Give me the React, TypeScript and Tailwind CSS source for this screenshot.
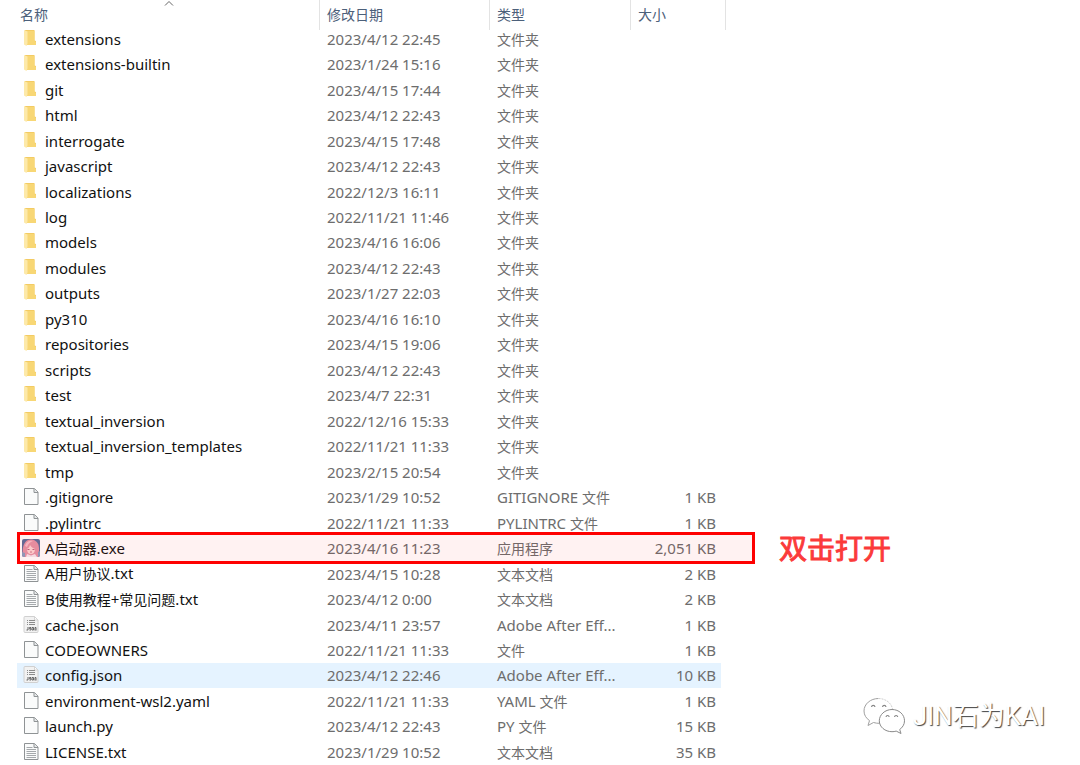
type Kind = "folder" | "blank" | "text" | "json" | "app";

type Entry = {
  name: string;
  date: string;
  type: string;
  size?: string;
  kind: Kind;
};

const folder = (name: string, date: string): Entry => ({ name, date, type: "文件夹", kind: "folder" });

const entries: Entry[] = [
  folder("extensions", "2023/4/12 22:45"),
  folder("extensions-builtin", "2023/1/24 15:16"),
  folder("git", "2023/4/15 17:44"),
  folder("html", "2023/4/12 22:43"),
  folder("interrogate", "2023/4/15 17:48"),
  folder("javascript", "2023/4/12 22:43"),
  folder("localizations", "2022/12/3 16:11"),
  folder("log", "2022/11/21 11:46"),
  folder("models", "2023/4/16 16:06"),
  folder("modules", "2023/4/12 22:43"),
  folder("outputs", "2023/1/27 22:03"),
  folder("py310", "2023/4/16 16:10"),
  folder("repositories", "2023/4/15 19:06"),
  folder("scripts", "2023/4/12 22:43"),
  folder("test", "2023/4/7 22:31"),
  folder("textual_inversion", "2022/12/16 15:33"),
  folder("textual_inversion_templates", "2022/11/21 11:33"),
  folder("tmp", "2023/2/15 20:54"),
  { name: ".gitignore", date: "2023/1/29 10:52", type: "GITIGNORE 文件", size: "1 KB", kind: "blank" },
  { name: ".pylintrc", date: "2022/11/21 11:33", type: "PYLINTRC 文件", size: "1 KB", kind: "blank" },
  { name: "A启动器.exe", date: "2023/4/16 11:23", type: "应用程序", size: "2,051 KB", kind: "app" },
  { name: "A用户协议.txt", date: "2023/4/15 10:28", type: "文本文档", size: "2 KB", kind: "text" },
  { name: "B使用教程+常见问题.txt", date: "2023/4/12 0:00", type: "文本文档", size: "2 KB", kind: "text" },
  { name: "cache.json", date: "2023/4/11 23:57", type: "Adobe After Eff...", size: "1 KB", kind: "json" },
  { name: "CODEOWNERS", date: "2022/11/21 11:33", type: "文件", size: "1 KB", kind: "blank" },
  { name: "config.json", date: "2023/4/12 22:46", type: "Adobe After Eff...", size: "10 KB", kind: "json" },
  { name: "environment-wsl2.yaml", date: "2022/11/21 11:33", type: "YAML 文件", size: "1 KB", kind: "blank" },
  { name: "launch.py", date: "2023/4/12 22:43", type: "PY 文件", size: "15 KB", kind: "blank" },
  { name: "LICENSE.txt", date: "2023/1/29 10:52", type: "文本文档", size: "35 KB", kind: "text" },
];

/* Han characters are set one step smaller than the Latin text beside them. */
function MixedText({ text }: { text: string }) {
  return (
    <>
      {text.split(/([\u4e00-\u9fff]+)/).map((run, i) =>
        i % 2 === 1 ? (
          <span key={i} className="text-[14px]">
            {run}
          </span>
        ) : (
          run
        ),
      )}
    </>
  );
}

function FileIcon({ kind }: { kind: Kind }) {
  return (
    <svg viewBox="0 0 20 20" className="size-5 shrink-0" aria-hidden="true">
      {kind === "folder" && (
        <>
          <path d="M4 1h9.500v10.500l1.500.500v4H5z" fill="#f3cb63" />
          <path d="M6 2h7.500v10l1.500 1v3H6z" fill="#f8d775" />
          <path d="M3 1l3.500 1.500v12L5.500 17 3 15.500z" fill="#fde9a9" />
        </>
      )}
      {(kind === "blank" || kind === "text") && (
        <>
          <path d="M3.500 1.500h10l3.500 3.500v12.500H3.500z" fill="#fafbfb" stroke="#8f9395" />
          <path d="M13 1.500v4h4" fill="#e4e7e8" stroke="#8f9395" />
        </>
      )}
      {kind === "text" && (
        <path d="M5.500 5.500h6M5.500 7.500h9.500M5.500 9.500h9.500M5.500 11.500h9.500M5.500 13.500h9.500M5.500 15.500h9.500" stroke="#a5a9ac" />
      )}
      {kind === "json" && (
        <>
          <path d="M4 1.500h9.500L17 5v11.500a1 1 0 0 1-1 1H4a1 1 0 0 1-1-1v-14a1 1 0 0 1 1-1z" fill="#f2f2f2" stroke="#d0d0d0" />
          <path d="M13.500 1.500V5H17z" fill="#fff" stroke="#d4d4d4" />
          <path d="M6 5.500h1M8 5.500h6M6 7.500h1M8 7.500h6M6 9.500h1M8 9.500h6" stroke="#8b8b8b" />
          <path d="M7 12v3H5.500M10 12.500H8.500v1.200H10V15H8.500M11 12.500h1.500V15H11zM14 15.500v-3h1v3" fill="none" stroke="#666" />
        </>
      )}
      {kind === "app" && (
        <>
          <rect x="1" y="1" width="18" height="18" rx="2" fill="#5c6f9c" />
          <path d="M2 19C1 12 2 5 6 2.500 10 0 16 2 17.500 7c1 4 .5 8-.5 12z" fill="#e593a6" />
          <path d="M4 8C5 4 8 2 12 3c-3 1-5 3-6 6z" fill="#f6bdc9" />
          <path d="M6 11c1.500-1 2.500-2 3-4 1 2 3 3 5 4 0 3-1.500 5-4 5s-4-2-4-5z" fill="#fbd5d5" />
          <path d="M6.500 11.500h2M11.500 11.500h2" stroke="#b9607c" />
          <path d="M9 14h2" stroke="#d0768a" />
          <path d="M5 19l1-3 4 1.500L14 16l2 3z" fill="#f3e7ee" />
          <path d="M1 14l3 1v4H3a2 2 0 0 1-2-2zM17 14l2-1v4a2 2 0 0 1-2 2z" fill="#8a9dc0" />
        </>
      )}
    </svg>
  );
}

function Callout() {
  return (
    <div className="pointer-events-none absolute -inset-y-[3px] left-0 flex items-center">
      <div className="h-full w-[738px] border-[3px] border-[#fe0000] bg-[#ff0000]/5" />
      <span className="pl-6 text-[28px] leading-none whitespace-nowrap text-[#fb3a3a] [-webkit-text-stroke:1px_#fb3a3a]">
        双击打开
      </span>
    </div>
  );
}

function HeaderCell({ label, sorted = false, span = 1 }: { label: string; sorted?: boolean; span?: number }) {
  return (
    <th scope="col" colSpan={span} className="relative p-0 text-left align-top font-normal">
      <button
        type="button"
        className={`-mb-1 block h-[30px] w-full border-r border-[#e3e3e3] text-left text-[14px] leading-[30px] text-[#4c607a] ${sorted ? "pl-[3px]" : "pl-[7px]"}`}
      >
        {label}
      </button>
      {sorted && (
        <svg viewBox="0 0 10 6" className="absolute top-0 left-1/2 h-1.5 w-2.5 -translate-x-1/2" aria-hidden="true">
          <path d="M1 5.500L5 1.500l4 4" fill="none" stroke="#666" />
        </svg>
      )}
    </th>
  );
}

function Watermark() {
  return (
    <div className="absolute right-[35px] bottom-[30px] flex items-center gap-2">
      <svg viewBox="0 0 42 38" className="h-[38px] w-[42px]" aria-hidden="true">
        <g fill="#fff" stroke="#8a8a8a" strokeWidth="1">
          <path
            d="M15.500 1.500C7.500 1.500 1 7 1 14c0 4 2.200 7.300 5.500 9.600L5 28.500l5.500-3c2 .6 4 .9 6 .8"
            stroke="#a0a0a0"
          />
          <path d="M15.500 1.500c7 0 13 4.500 14 10.500" stroke="#cfcfcf" strokeDasharray="2 1" />
          <path d="M29 12.500c7 0 12.500 5 12.500 11.300 0 3.700-2 6.700-4.800 8.700l1.300 4-4.800-2.400c-1.300.4-2.800.6-4.200.6-7 0-12.700-4.800-12.700-10.900S22 12.500 29 12.500z" />
        </g>
        <g fill="none" stroke="#858585" strokeWidth="1.200">
          <path d="M8.500 10c.4-2.200 3.100-2.200 3.500 0M19.500 10c.4-2.200 3.100-2.200 3.500 0M23 20c.4-2 2.800-2 3.200 0M31.500 20c.4-2 2.800-2 3.200 0" />
        </g>
      </svg>
      <span className="font-[Roboto,'Noto_Sans_CJK_SC',sans-serif] text-[26px] leading-8 whitespace-nowrap text-white [text-shadow:1px_1px_1px_#444]">
        JIN石为KAI
      </span>
    </div>
  );
}

export default function App() {
  return (
    <main className="relative min-h-screen overflow-hidden bg-white pl-[17px] font-['Noto_Sans','Noto_Sans_CJK_SC',sans-serif]">
      <table className="h-screen w-full max-w-[709px] table-fixed border-collapse">
        <colgroup>
          <col className="w-[303px]" />
          <col className="w-[170px]" />
          <col className="w-[141px]" />
          <col />
          <col className="w-[5px]" />
        </colgroup>
        <thead>
          <tr className="h-[26px]">
            <HeaderCell label="名称" sorted />
            <HeaderCell label="修改日期" />
            <HeaderCell label="类型" />
            <HeaderCell label="大小" span={2} />
          </tr>
        </thead>
        <tbody className="text-[15px] leading-6 text-[#6d6d6d]">
          {entries.map((entry) => {
            const tint = entry.name === "config.json" ? "bg-[#e5f3ff]" : "";
            return (
              <tr key={entry.name} className="relative">
                <td className={`p-0 pl-1 ${tint}`}>
                  <div className="flex h-6 items-center gap-1">
                    <FileIcon kind={entry.kind} />
                    <span className="whitespace-nowrap text-[#111]">
                      <MixedText text={entry.name} />
                    </span>
                  </div>
                </td>
                <td className={`p-0 pl-[7px] whitespace-nowrap ${tint}`}>{entry.date}</td>
                <td className={`p-0 pl-[7px] whitespace-nowrap ${tint}`}>
                  <div className="h-6">
                    <MixedText text={entry.type} />
                  </div>
                </td>
                <td className={`p-0 pr-[5px] text-right whitespace-nowrap ${tint}`}>{entry.size}</td>
                <td className="p-0">{entry.kind === "app" && <Callout />}</td>
              </tr>
            );
          })}
        </tbody>
      </table>
      <Watermark />
    </main>
  );
}
